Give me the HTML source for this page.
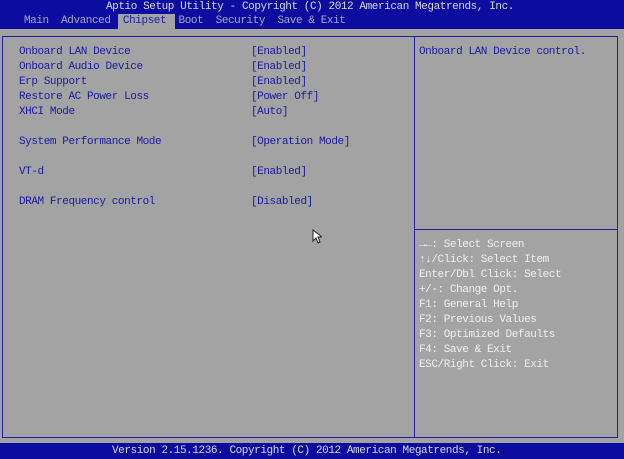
<!DOCTYPE html>
<html><head><style>
body{margin:0;width:624px;height:459px;background:#a3a3a3;position:relative;overflow:hidden;font-family:"Liberation Mono",monospace;font-size:11px;letter-spacing:-0.42px;line-height:15px}
.a{position:absolute;white-space:pre}
.top{position:absolute;left:0;top:0;width:624px;height:29px;background:#0c0c9e}
.bot{position:absolute;left:0;top:443px;width:624px;height:16px;background:#0c0c9e}
.w{color:#d8d8e8}
.b{color:#1a1aa0}
.h{color:#f0f0f0}
.box{position:absolute;left:2px;top:36px;width:614px;height:400px;border:1px solid #2020a0}
.div{position:absolute;left:414px;top:36px;width:1px;height:402px;background:#2020a0}
.hl{position:absolute;left:415px;top:229px;width:202px;height:1px;background:#2020a0}
</style></head><body>
<div class="top"></div>
<div class="a w" style="left:106px;top:0px">Aptio Setup Utility - Copyright (C) 2012 American Megatrends, Inc.</div>
<div class="a" style="left:118px;top:14px;width:57px;height:15px;background:#a3a3a3"></div>
<div class="a" style="left:24px;top:14px;color:#a8a8c8">Main  Advanced  <span class="b">Chipset</span>  Boot  Security  Save &amp; Exit</div>
<div class="box"></div><div class="div"></div><div class="hl"></div>
<div class="a b" style="left:19px;top:45px">Onboard LAN Device
Onboard Audio Device
Erp Support
Restore AC Power Loss
XHCI Mode

System Performance Mode

VT-d

DRAM Frequency control</div>
<div class="a b" style="left:251px;top:45px">[Enabled]
[Enabled]
[Enabled]
[Power Off]
[Auto]

[Operation Mode]

[Enabled]

[Disabled]</div>
<div class="a b" style="left:419px;top:45px">Onboard LAN Device control.</div>
<div class="a h" style="left:419px;top:238px">→←: Select Screen
↑↓/Click: Select Item
Enter/Dbl Click: Select
+/-: Change Opt.
F1: General Help
F2: Previous Values
F3: Optimized Defaults
F4: Save &amp; Exit
ESC/Right Click: Exit</div>
<svg class="a" style="left:312px;top:229px" width="10" height="16"><path d="M1 1 L1 12 L4 9 L6 14 L8 13 L6 8 L10 8 Z" fill="#fff" stroke="#222" stroke-width="1"/></svg>
<div class="bot"></div>
<div class="a w" style="left:112px;top:444px">Version 2.15.1236. Copyright (C) 2012 American Megatrends, Inc.</div>
</body></html>
